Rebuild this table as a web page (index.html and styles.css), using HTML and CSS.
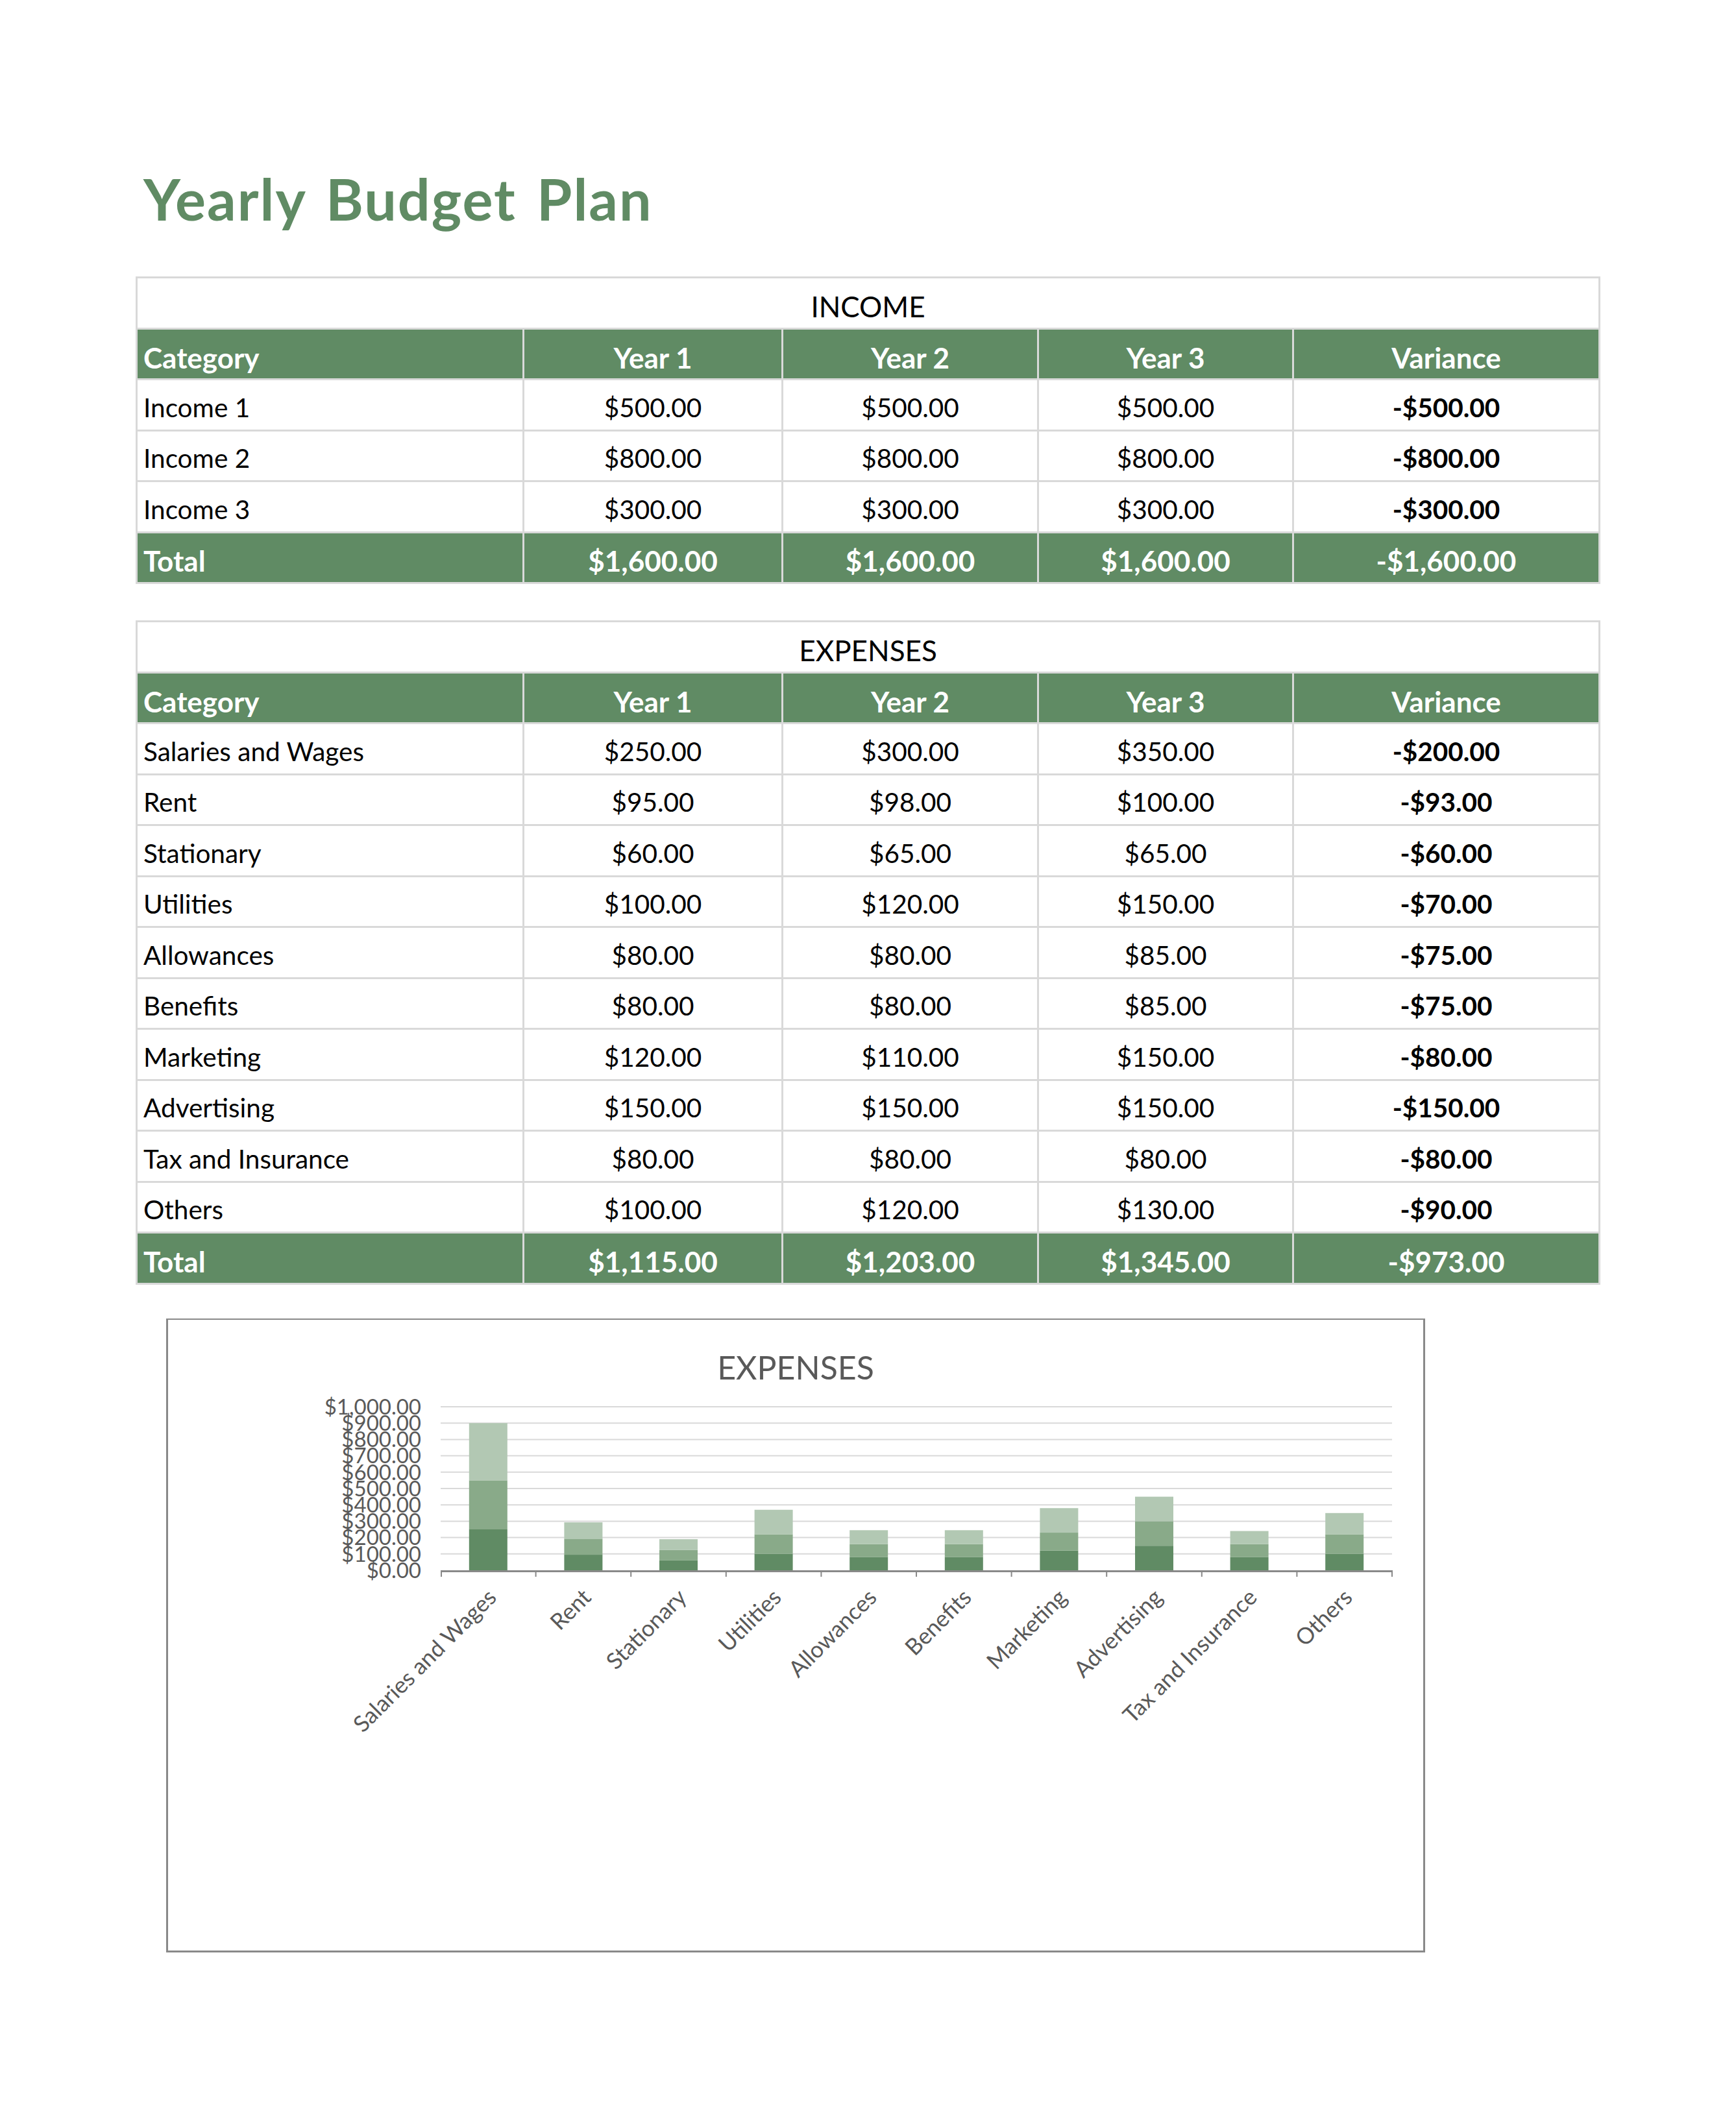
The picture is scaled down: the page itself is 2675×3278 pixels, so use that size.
FILE: index.html
```html
<!DOCTYPE html>
<html lang="en">
<head>
<meta charset="utf-8">
<title>Yearly Budget Plan</title>
<link rel="stylesheet" href="styles.css">
</head>
<body>
<div class="page">
  <h1 class="doc-title">Yearly Budget Plan</h1>

  <table class="budget">
    <colgroup><col class="c-cat"><col class="c-y1"><col class="c-y2"><col class="c-y3"><col class="c-var"></colgroup>
    <tr class="section"><td colspan="5">INCOME</td></tr>
    <tr class="head"><td>Category</td><td class="num">Year 1</td><td class="num">Year 2</td><td class="num">Year 3</td><td class="num">Variance</td></tr>
    <tr><td>Income 1</td><td class="num">$500.00</td><td class="num">$500.00</td><td class="num">$500.00</td><td class="num var">-$500.00</td></tr>
    <tr><td>Income 2</td><td class="num">$800.00</td><td class="num">$800.00</td><td class="num">$800.00</td><td class="num var">-$800.00</td></tr>
    <tr><td>Income 3</td><td class="num">$300.00</td><td class="num">$300.00</td><td class="num">$300.00</td><td class="num var">-$300.00</td></tr>
    <tr class="total"><td>Total</td><td class="num">$1,600.00</td><td class="num">$1,600.00</td><td class="num">$1,600.00</td><td class="num">-$1,600.00</td></tr>
  </table>

  <table class="budget expenses">
    <colgroup><col class="c-cat"><col class="c-y1"><col class="c-y2"><col class="c-y3"><col class="c-var"></colgroup>
    <tr class="section"><td colspan="5">EXPENSES</td></tr>
    <tr class="head"><td>Category</td><td class="num">Year 1</td><td class="num">Year 2</td><td class="num">Year 3</td><td class="num">Variance</td></tr>
    <tr><td>Salaries and Wages</td><td class="num">$250.00</td><td class="num">$300.00</td><td class="num">$350.00</td><td class="num var">-$200.00</td></tr>
    <tr><td>Rent</td><td class="num">$95.00</td><td class="num">$98.00</td><td class="num">$100.00</td><td class="num var">-$93.00</td></tr>
    <tr><td>Stationary</td><td class="num">$60.00</td><td class="num">$65.00</td><td class="num">$65.00</td><td class="num var">-$60.00</td></tr>
    <tr><td>Utilities</td><td class="num">$100.00</td><td class="num">$120.00</td><td class="num">$150.00</td><td class="num var">-$70.00</td></tr>
    <tr><td>Allowances</td><td class="num">$80.00</td><td class="num">$80.00</td><td class="num">$85.00</td><td class="num var">-$75.00</td></tr>
    <tr><td>Benefits</td><td class="num">$80.00</td><td class="num">$80.00</td><td class="num">$85.00</td><td class="num var">-$75.00</td></tr>
    <tr><td>Marketing</td><td class="num">$120.00</td><td class="num">$110.00</td><td class="num">$150.00</td><td class="num var">-$80.00</td></tr>
    <tr><td>Advertising</td><td class="num">$150.00</td><td class="num">$150.00</td><td class="num">$150.00</td><td class="num var">-$150.00</td></tr>
    <tr><td>Tax and Insurance</td><td class="num">$80.00</td><td class="num">$80.00</td><td class="num">$80.00</td><td class="num var">-$80.00</td></tr>
    <tr><td>Others</td><td class="num">$100.00</td><td class="num">$120.00</td><td class="num">$130.00</td><td class="num var">-$90.00</td></tr>
    <tr class="total"><td>Total</td><td class="num">$1,115.00</td><td class="num">$1,203.00</td><td class="num">$1,345.00</td><td class="num">-$973.00</td></tr>
  </table>

  <div class="chart">
    <svg class="chart-svg" width="1934" height="971" viewBox="259 2034 1934 971" xmlns="http://www.w3.org/2000/svg">
      <text class="chart-title" x="1226" y="2126" text-anchor="middle">EXPENSES</text>

      <g class="grid">
        <line x1="679" x2="2145" y1="2394.8" y2="2394.8"/>
        <line x1="679" x2="2145" y1="2369.6" y2="2369.6"/>
        <line x1="679" x2="2145" y1="2344.4" y2="2344.4"/>
        <line x1="679" x2="2145" y1="2319.2" y2="2319.2"/>
        <line x1="679" x2="2145" y1="2294" y2="2294"/>
        <line x1="679" x2="2145" y1="2268.8" y2="2268.8"/>
        <line x1="679" x2="2145" y1="2243.6" y2="2243.6"/>
        <line x1="679" x2="2145" y1="2218.4" y2="2218.4"/>
        <line x1="679" x2="2145" y1="2193.2" y2="2193.2"/>
        <line x1="679" x2="2145" y1="2168" y2="2168"/>
      </g>

      <g class="ylabels" text-anchor="end">
        <text x="649" y="2431.8">$0.00</text>
        <text x="649" y="2406.6">$100.00</text>
        <text x="649" y="2381.4">$200.00</text>
        <text x="649" y="2356.2">$300.00</text>
        <text x="649" y="2331">$400.00</text>
        <text x="649" y="2305.8">$500.00</text>
        <text x="649" y="2280.6">$600.00</text>
        <text x="649" y="2255.4">$700.00</text>
        <text x="649" y="2230.2">$800.00</text>
        <text x="649" y="2205">$900.00</text>
        <text x="649" y="2179.8">$1,000.00</text>
      </g>

      <g class="bars">
        <rect class="y1" x="722.8" y="2357" width="59" height="63"/>
        <rect class="y2" x="722.8" y="2281.4" width="59" height="75.6"/>
        <rect class="y3" x="722.8" y="2193.2" width="59" height="88.2"/>

        <rect class="y1" x="869.4" y="2396.06" width="59" height="23.94"/>
        <rect class="y2" x="869.4" y="2371.36" width="59" height="24.7"/>
        <rect class="y3" x="869.4" y="2346.16" width="59" height="25.2"/>

        <rect class="y1" x="1016" y="2404.88" width="59" height="15.12"/>
        <rect class="y2" x="1016" y="2388.5" width="59" height="16.38"/>
        <rect class="y3" x="1016" y="2372.12" width="59" height="16.38"/>

        <rect class="y1" x="1162.6" y="2394.8" width="59" height="25.2"/>
        <rect class="y2" x="1162.6" y="2364.56" width="59" height="30.24"/>
        <rect class="y3" x="1162.6" y="2326.76" width="59" height="37.8"/>

        <rect class="y1" x="1309.2" y="2399.84" width="59" height="20.16"/>
        <rect class="y2" x="1309.2" y="2379.68" width="59" height="20.16"/>
        <rect class="y3" x="1309.2" y="2358.26" width="59" height="21.42"/>

        <rect class="y1" x="1455.8" y="2399.84" width="59" height="20.16"/>
        <rect class="y2" x="1455.8" y="2379.68" width="59" height="20.16"/>
        <rect class="y3" x="1455.8" y="2358.26" width="59" height="21.42"/>

        <rect class="y1" x="1602.4" y="2389.76" width="59" height="30.24"/>
        <rect class="y2" x="1602.4" y="2362.04" width="59" height="27.72"/>
        <rect class="y3" x="1602.4" y="2324.24" width="59" height="37.8"/>

        <rect class="y1" x="1749" y="2382.2" width="59" height="37.8"/>
        <rect class="y2" x="1749" y="2344.4" width="59" height="37.8"/>
        <rect class="y3" x="1749" y="2306.6" width="59" height="37.8"/>

        <rect class="y1" x="1895.6" y="2399.84" width="59" height="20.16"/>
        <rect class="y2" x="1895.6" y="2379.68" width="59" height="20.16"/>
        <rect class="y3" x="1895.6" y="2359.52" width="59" height="20.16"/>

        <rect class="y1" x="2042.2" y="2394.8" width="59" height="25.2"/>
        <rect class="y2" x="2042.2" y="2364.56" width="59" height="30.24"/>
        <rect class="y3" x="2042.2" y="2331.8" width="59" height="32.76"/>
      </g>

      <g class="axis">
        <line x1="679" x2="2146" y1="2421.5" y2="2421.5" class="axis-line"/>
        <line x1="680" x2="680" y1="2420" y2="2430"/>
        <line x1="825.6" x2="825.6" y1="2420" y2="2430"/>
        <line x1="972.2" x2="972.2" y1="2420" y2="2430"/>
        <line x1="1118.8" x2="1118.8" y1="2420" y2="2430"/>
        <line x1="1265.4" x2="1265.4" y1="2420" y2="2430"/>
        <line x1="1412" x2="1412" y1="2420" y2="2430"/>
        <line x1="1558.6" x2="1558.6" y1="2420" y2="2430"/>
        <line x1="1705.2" x2="1705.2" y1="2420" y2="2430"/>
        <line x1="1851.8" x2="1851.8" y1="2420" y2="2430"/>
        <line x1="1998.4" x2="1998.4" y1="2420" y2="2430"/>
        <line x1="2145" x2="2145" y1="2420" y2="2430"/>
      </g>

      <g class="xlabels" text-anchor="end">
        <text x="767" y="2464" transform="rotate(-45 767 2464)">Salaries and Wages</text>
        <text x="913" y="2464" transform="rotate(-45 913 2464)">Rent</text>
        <text x="1060" y="2464" transform="rotate(-45 1060 2464)">Stationary</text>
        <text x="1206" y="2464" transform="rotate(-45 1206 2464)">Utilities</text>
        <text x="1353" y="2464" transform="rotate(-45 1353 2464)">Allowances</text>
        <text x="1499" y="2464" transform="rotate(-45 1499 2464)">Benefits</text>
        <text x="1646" y="2464" transform="rotate(-45 1646 2464)">Marketing</text>
        <text x="1793" y="2464" transform="rotate(-45 1793 2464)">Advertising</text>
        <text x="1939" y="2464" transform="rotate(-45 1939 2464)">Tax and Insurance</text>
        <text x="2086" y="2464" transform="rotate(-45 2086 2464)">Others</text>
      </g>
    </svg>
  </div>
</div>
</body>
</html>
```

FILE: styles.css
```css
html, body {
  margin: 0;
  padding: 0;
  background: #ffffff;
}

body {
  font-family: "Lato", "Liberation Sans", sans-serif;
  color: #000000;
}

.page {
  padding: 253px 0 0 209px;
}

.doc-title {
  margin: 0 0 67px 12px;
  font-size: 88px;
  line-height: 106px;
  font-weight: 700;
  letter-spacing: 2px;
  word-spacing: 8px;
  color: #608b64;
}

.budget {
  border-collapse: separate;
  border-spacing: 3px;
  background: #d9d9d9;
  width: 2257px;
  table-layout: fixed;
}

.expenses {
  margin-top: 56px;
}

.c-cat { width: 593px; }
.c-y1 { width: 396px; }
.c-y2 { width: 391px; }
.c-y3 { width: 390px; }
.c-var { width: 469px; }

.budget tr {
  height: 75.5px;
}

.budget td {
  background: #ffffff;
  padding: 0 9px 9px;
  vertical-align: bottom;
  font-size: 40.5px;
  line-height: 1.2;
  white-space: nowrap;
  overflow: hidden;
}

.budget .num {
  text-align: center;
}

.budget .var {
  font-weight: 700;
}

.budget .section td {
  text-align: center;
  font-size: 44px;
  padding-bottom: 6px;
}

.budget .head td,
.budget .total td {
  background: #608b64;
  color: #ffffff;
  font-weight: 700;
  font-size: 44px;
}

.budget .head td {
  padding-bottom: 5px;
}

.budget .total td {
  padding-bottom: 6px;
}

.chart {
  margin: 52px 0 0 47px;
  width: 1940px;
  height: 977px;
  box-sizing: border-box;
  border: 3px solid #898989;
  border-top-width: 2px;
  background: #ffffff;
}

.chart-svg {
  display: block;
}

.chart-title {
  font-size: 50px;
  fill: #595959;
}

.grid line {
  stroke: #d9d9d9;
  stroke-width: 2;
}

.ylabels text {
  font-size: 33px;
  fill: #595959;
}

.xlabels text {
  font-size: 35px;
  fill: #595959;
}

.bars .y1 { fill: #608b64; }
.bars .y2 { fill: #89aa89; }
.bars .y3 { fill: #b2c8b3; }

.axis line {
  stroke: #898989;
  stroke-width: 2;
}

.axis .axis-line {
  stroke-width: 3;
}
```
